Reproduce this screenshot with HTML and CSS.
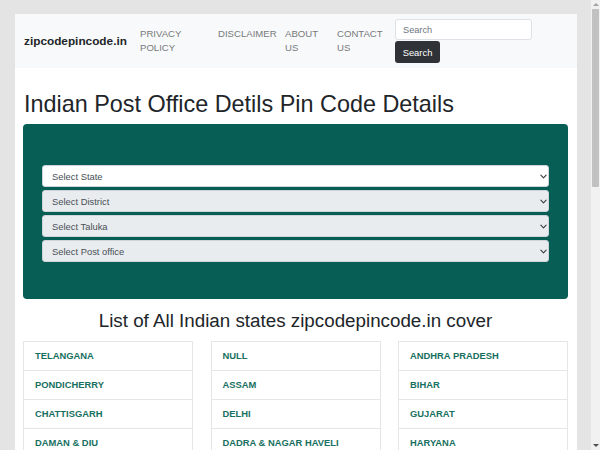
FILE: index.html
```html
<!DOCTYPE html>
<html lang="en">
<head>
<meta charset="utf-8">
<title>Indian Post Office Detils Pin Code Details</title>
<link rel="stylesheet" href="styles.css">
</head>
<body>
<div class="viewport">
  <div class="page">
    <nav class="navbar">
      <a class="brand" href="#">zipcodepincode.in</a>
      <ul class="nav">
        <li class="nav-item w1"><a href="#">PRIVACY POLICY</a></li>
        <li class="nav-item w2"><a href="#">DISCLAIMER</a></li>
        <li class="nav-item w3"><a href="#">ABOUT US</a></li>
        <li class="nav-item w4"><a href="#">CONTACT US</a></li>
      </ul>
      <form class="search">
        <input class="search-input" type="text" placeholder="Search">
        <button class="search-btn" type="button">Search</button>
      </form>
    </nav>
    <main class="content">
      <h1 class="title">Indian Post Office Detils Pin Code Details</h1>
      <div class="finder">
        <div class="select-wrap">
          <select class="sel sel-active"><option>Select State</option></select>
          <svg class="chev" viewBox="0 0 16 16" width="7" height="7"><path d="M2 5l6 6 6-6" fill="none" stroke="#343a40" stroke-width="2.5" stroke-linecap="round" stroke-linejoin="round"/></svg>
        </div>
        <div class="select-wrap">
          <select class="sel" disabled><option>Select District</option></select>
          <svg class="chev" viewBox="0 0 16 16" width="7" height="7"><path d="M2 5l6 6 6-6" fill="none" stroke="#343a40" stroke-width="2.5" stroke-linecap="round" stroke-linejoin="round"/></svg>
        </div>
        <div class="select-wrap">
          <select class="sel" disabled><option>Select Taluka</option></select>
          <svg class="chev" viewBox="0 0 16 16" width="7" height="7"><path d="M2 5l6 6 6-6" fill="none" stroke="#343a40" stroke-width="2.5" stroke-linecap="round" stroke-linejoin="round"/></svg>
        </div>
        <div class="select-wrap">
          <select class="sel" disabled><option>Select Post office</option></select>
          <svg class="chev" viewBox="0 0 16 16" width="7" height="7"><path d="M2 5l6 6 6-6" fill="none" stroke="#343a40" stroke-width="2.5" stroke-linecap="round" stroke-linejoin="round"/></svg>
        </div>
      </div>
      <h2 class="list-title">List of All Indian states zipcodepincode.in cover</h2>
      <div class="states">
        <ul class="state-col">
          <li><a href="#">TELANGANA</a></li>
          <li><a href="#">PONDICHERRY</a></li>
          <li><a href="#">CHATTISGARH</a></li>
          <li><a href="#">DAMAN &amp; DIU</a></li>
        </ul>
        <ul class="state-col">
          <li><a href="#">NULL</a></li>
          <li><a href="#">ASSAM</a></li>
          <li><a href="#">DELHI</a></li>
          <li><a href="#">DADRA &amp; NAGAR HAVELI</a></li>
        </ul>
        <ul class="state-col">
          <li><a href="#">ANDHRA PRADESH</a></li>
          <li><a href="#">BIHAR</a></li>
          <li><a href="#">GUJARAT</a></li>
          <li><a href="#">HARYANA</a></li>
        </ul>
      </div>
    </main>
  </div>
</div>
<div class="scrollbar">
  <div class="sb-arrow sb-up"></div>
  <div class="sb-thumb"></div>
  <div class="sb-space"></div>
  <div class="sb-arrow sb-down"></div>
</div>
</body>
</html>
```

FILE: styles.css
```css
html, body {
  margin: 0;
  padding: 0;
  height: 450px;
  overflow: hidden;
}
body {
  display: flex;
  background: #e4e4e4;
  font-family: "Liberation Sans", Arial, sans-serif;
  color: #212529;
}
.viewport {
  flex: 1;
  height: 450px;
  overflow: hidden;
  padding: 14px 14px 0 15px;
}
.page {
  background: #fff;
  min-height: 500px;
}
.navbar {
  display: flex;
  align-items: center;
  height: 54px;
  background: #f8f9fa;
  padding: 0 9px;
}
.brand {
  font-size: 11.8px;
  font-weight: bold;
  color: #212529;
  text-decoration: none;
  width: 116px;
}
.nav {
  display: flex;
  align-items: flex-start;
  list-style: none;
  margin: -1px 0 0;
  padding: 0;
}
.nav-item a {
  font-size: 9.6px;
  line-height: 14px;
  color: #77797b;
  text-decoration: none;
  display: block;
}
.w1 { width: 50px; margin-right: 28px; }
.w2 { width: 62px; margin-right: 5px; }
.w3 { width: 40px; margin-right: 12px; }
.w4 { width: 48px; margin-right: 10px; }
.search {
  display: flex;
  flex-direction: column;
  align-items: flex-start;
  margin: 0;
}
.search-input {
  width: 137px;
  height: 21px;
  box-sizing: border-box;
  border: 1px solid #dee2e6;
  border-radius: 3px;
  padding: 0 7px;
  font-family: inherit;
  font-size: 9.2px;
  color: #495057;
  background: #fff;
}
.search-input::placeholder { color: #6c757d; }
.search-btn {
  margin-top: 1px;
  width: 45px;
  height: 22px;
  box-sizing: border-box;
  border: 0;
  border-radius: 3px;
  background: #2f3337;
  color: #fff;
  font-family: inherit;
  font-size: 9.4px;
  padding: 0;
}
.content {
  padding: 0 9px 0 8px;
}
.title {
  margin: 0;
  padding: 22px 0 6px 1px;
  font-size: 23.4px;
  font-weight: normal;
  line-height: 28px;
  color: #212529;
}
.finder {
  background: #075e54;
  border-radius: 4px;
  padding: 41px 19px 37px 19px;
  display: flex;
  flex-direction: column;
  gap: 3px;
}
.select-wrap {
  position: relative;
}
.sel {
  display: block;
  appearance: none;
  -webkit-appearance: none;
  width: 100%;
  height: 22px;
  box-sizing: border-box;
  border: 1px solid #ced4da;
  border-radius: 3px;
  background: #e9ecef;
  color: #495057;
  font-family: inherit;
  font-size: 9.4px;
  padding: 0 9px;
  opacity: 1;
}
.sel-active { background: #fff; }
.chev {
  position: absolute;
  right: 2px;
  top: 8px;
}
.list-title {
  margin: 0;
  padding: 10px 0 8px;
  text-align: center;
  font-size: 18.8px;
  font-weight: normal;
  line-height: 24px;
  color: #212529;
}
.states {
  display: grid;
  grid-template-columns: repeat(3, 1fr);
  column-gap: 17.5px;
}
.state-col {
  list-style: none;
  margin: 0;
  padding: 0;
  border: 1px solid #e6e6e6;
}
.state-col li {
  height: 29px;
  box-sizing: border-box;
  border-top: 1px solid #e6e6e6;
  display: flex;
  align-items: center;
  padding-left: 11px;
  padding-bottom: 1px;
}
.state-col li:first-child { border-top: 0; height: 28px; }
.state-col a {
  font-size: 9.4px;
  font-weight: bold;
  color: #17705f;
  text-decoration: none;
}
.scrollbar {
  width: 9px;
  height: 450px;
  background: #f1f1f1;
  display: flex;
  flex-direction: column;
  align-items: center;
}
.sb-arrow {
  height: 9px;
  width: 9px;
  display: flex;
  align-items: center;
  justify-content: center;
}
.sb-up::before {
  content: "";
  border-left: 3px solid transparent;
  border-right: 3px solid transparent;
  border-bottom: 3px solid #a3a3a3;
}
.sb-down::before {
  content: "";
  border-left: 3px solid transparent;
  border-right: 3px solid transparent;
  border-top: 3px solid #505050;
}
.sb-thumb {
  width: 7px;
  height: 178px;
  background: #c1c1c1;
  border-radius: 1px;
}
.sb-space {
  flex: 1;
}
```
